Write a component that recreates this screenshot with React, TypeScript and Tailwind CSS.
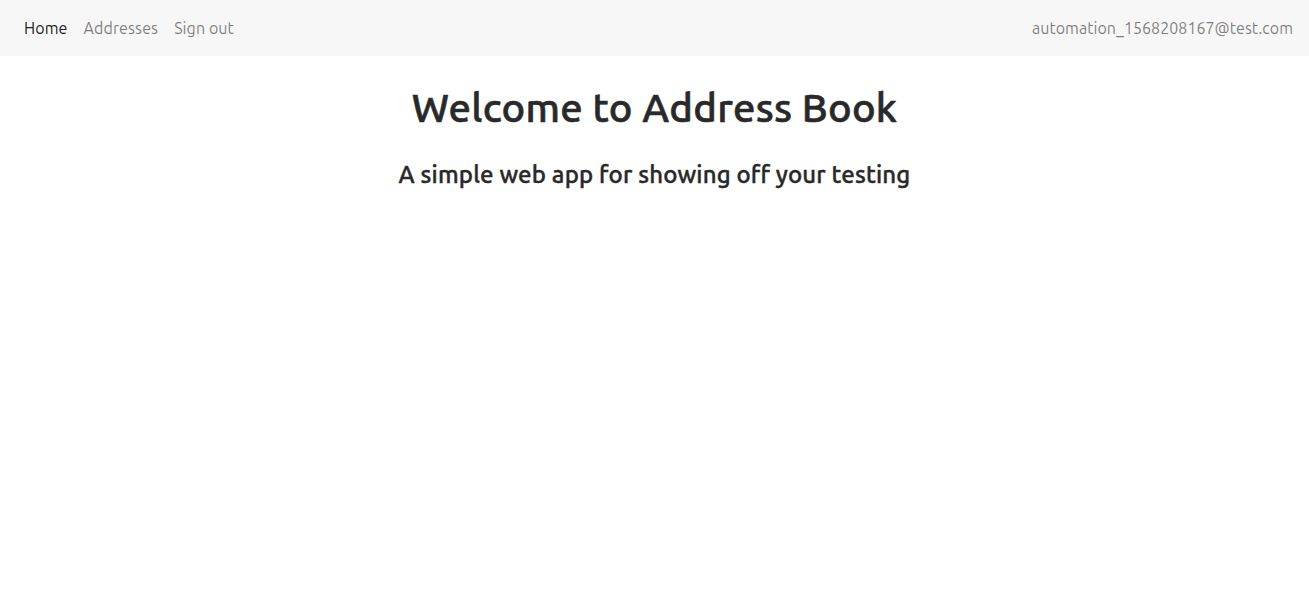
export default function App() {
  return (
    <div className="min-h-screen bg-white font-['Ubuntu','Open_Sans',sans-serif] text-[#212529]">
      <nav className="flex h-14 items-center justify-between bg-[#f7f7f7] px-4 tracking-[0.1px]">
        <ul className="flex items-center">
          <li>
            <a className="px-2 text-base text-black/90" href="#">Home</a>
          </li>
          <li>
            <a className="px-2 text-base text-black/50" href="#">Addresses</a>
          </li>
          <li>
            <a className="px-2 text-base text-black/50" href="#">Sign out</a>
          </li>
        </ul>
        <span className="text-base tracking-[0.04px] text-black/50">automation_1568208167@test.com</span>
      </nav>
      <div className="pt-7 text-center">
        <h1 className="mb-2 text-[40px] leading-[1.2] font-medium tracking-[0.25px] text-[#292929] [-webkit-text-stroke:0.6px_#292929]">
          Welcome to Address Book
        </h1>
        <h4 className="mt-[29px] text-2xl leading-[1.2] font-medium tracking-[0.15px] text-[#292929] [-webkit-text-stroke:0.4px_#292929]">
          A simple web app for showing off your testing
        </h4>
      </div>
    </div>
  );
}
